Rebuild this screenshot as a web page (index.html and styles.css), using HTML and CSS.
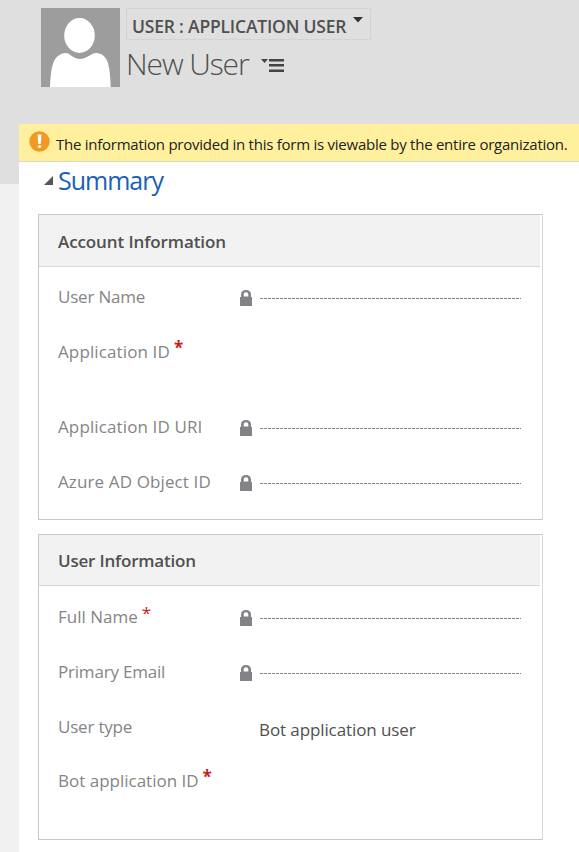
FILE: index.html
```html
<!DOCTYPE html>
<html lang="en">
<head>
<meta charset="utf-8">
<title>New User</title>
<link rel="stylesheet" href="styles.css">
</head>
<body>
<svg class="defs" aria-hidden="true"><symbol id="lock" viewBox="0 0 12 16"><path d="M0 7h1V4.500C1 1.500 3 0 6 0s5 1.500 5 4.500V7h1v9H0zM3.700 6.500h4.600V4.600C8.300 3.100 7.400 2.300 6 2.300S3.700 3.100 3.700 4.600z" fill="#828387" fill-rule="evenodd"/></symbol></svg>
<header class="header">
  <svg class="avatar" viewBox="0 0 79 79"><path fill="#9d9d9d" d="M0 0h79v79H0z"/><ellipse cx="38.500" cy="27.500" rx="15.300" ry="17.500" fill="#fff"/><path d="M9 79C9.500 69 10 62 12 56c2-7 7-11 13-11 4 0 7 6 14 6s11-6 16-6c6 0 10 4 12 10 2 7 2.300 15 2.700 24z" fill="#fff"/></svg>
  <div class="titles">
    <div class="selector"><span class="kind">USER : APPLICATION USER</span><svg class="caret" width="10" height="6" viewBox="0 0 10 6"><path d="M0 0h10L5 5.500z" fill="#333"/></svg></div>
    <div class="name-row"><h1 class="name">New User</h1><svg class="menu" width="24" height="15" viewBox="0 0 24 15"><path d="M0 1h7L3.500 5zM8 1h15v2.500H8zM8 6h15v2.500H8zM8 11.500h15V14H8z" fill="#444"/></svg></div>
  </div>
</header>
<main class="page">
  <div class="notice">
    <svg class="warn" width="21" height="21" viewBox="0 0 21 21"><circle cx="10.500" cy="10.500" r="10.200" fill="#f09a23"/><path d="M8.500 3.500h4L11.700 13H9.300z" fill="#fff"/><circle cx="10.500" cy="15.500" r="1.600" fill="#fff"/></svg>
    <span class="notice-text">The information provided in this form is viewable by the entire organization.</span>
  </div>
  <h2 class="summary"><svg width="9" height="9" viewBox="0 0 9 9"><path d="M9 0v9H0z" fill="#555"/></svg><span class="summary-text">Summary</span></h2>
  <section class="panel">
    <h3 class="panel-head"><span class="h-account">Account Information</span></h3>
    <div class="row"><span class="label snug">User Name</span><svg class="lock"><use href="#lock"/></svg><span class="line"></span></div>
    <div class="row tall"><span class="label wide">Application ID</span><b class="star">*</b></div>
    <div class="row"><span class="label wide">Application ID URI</span><svg class="lock"><use href="#lock"/></svg><span class="line"></span></div>
    <div class="row"><span class="label wide">Azure AD Object ID</span><svg class="lock"><use href="#lock"/></svg><span class="line"></span></div>
  </section>
  <section class="panel second">
    <h3 class="panel-head"><span class="h-user">User Information</span></h3>
    <div class="row"><span class="label">Full Name</span><b class="star thin">*</b><svg class="lock"><use href="#lock"/></svg><span class="line"></span></div>
    <div class="row"><span class="label snug">Primary Email</span><svg class="lock"><use href="#lock"/></svg><span class="line"></span></div>
    <div class="row short"><span class="label snug">User type</span><span class="value">Bot application user</span></div>
    <div class="row"><span class="label">Bot application ID</span><b class="star">*</b></div>
  </section>
</main>
</body>
</html>
```

FILE: styles.css
```css
* { box-sizing: border-box; }
body {
  margin: 0;
  height: 852px;
  overflow: hidden;
  font-family: "Open Sans", "Noto Sans", sans-serif;
  background: linear-gradient(#dfdfdf 184px, #f0f0f0 184px);
}
h1, h2, h3 { margin: 0; font-weight: 400; }
svg { flex: none; display: block; }
.defs { display: none; }
.header { height: 124px; display: flex; padding: 8px 0 0 41px; }
.avatar { width: 79px; height: 79px; }
.titles { margin-left: 6px; }
.selector {
  width: 245px; height: 32px; padding-left: 5px;
  display: flex; align-items: center;
  border: 1px solid #d3d3d3;
  color: #505050;
}
.kind { width: 215px; font-size: 17.5px; font-weight: 600; letter-spacing: -.2px; white-space: nowrap; padding-top: 3px; }
.caret { margin: -8px 0 0 6px; }
.name-row { display: flex; align-items: center; height: 46px; }
.name { width: 135px; font-size: 30px; font-weight: 300; letter-spacing: -1.1px; color: #505050; white-space: nowrap; }
.menu { margin-top: 4px; }
.page { margin-left: 19px; height: 728px; background: #fff; }
.notice { height: 38px; display: flex; padding: 7px 0 0 10px; background: #fff09d; border-bottom: 1px solid #ddd9c4; }
.notice-text { margin-left: 6px; padding-top: 2px; font-size: 15px; line-height: 22px; letter-spacing: -.25px; color: #222; white-space: nowrap; }
.summary { height: 52px; display: flex; padding-left: 25px; color: #1b5fb9; }
.summary svg { margin-top: 14px; }
.summary-text { margin-left: 5px; font-size: 25px; line-height: 36px; letter-spacing: -1px; }
.panel { width: 505px; height: 306px; margin-left: 19px; border: 1px solid #c6c8c8; border-right-color: #d9dada; }
.second { margin-top: 14px; }
.panel-head {
  height: 52px; margin: 0 2px 18px 0; padding: 1px 0 0 19px;
  display: flex; align-items: center;
  background: #f2f2f2; border-bottom: 1px solid #d9d9d9;
  font-size: 17px; font-weight: 600; color: #505050;
}
.h-account { letter-spacing: -.1px; }
.h-user { letter-spacing: -.2px; }
.second .panel-head { height: 51px; padding-top: 0; margin-bottom: 19px; }
.row { height: 55px; padding-left: 19px; display: flex; }
.tall { height: 75px; }
.short { height: 54px; }
.label { font-size: 17px; line-height: 24px; color: #858585; white-space: nowrap; }
.snug { letter-spacing: -.2px; }
.wide { letter-spacing: .12px; }
.star { margin: -4px 0 0 4px; font-size: 17px; line-height: 24px; color: #c71d1d; }
.thin { font-weight: 400; }
.lock { width: 12px; height: 16px; margin: 5px 8px 0 auto; }
.line { width: 261px; height: 1px; margin: 13px 21px 0 0; background: repeating-linear-gradient(90deg, #858585 0 3px, #eee 3px 4px); }
.value { width: 283px; margin-left: auto; padding-top: 3px; font-size: 17px; line-height: 24px; letter-spacing: -.1px; color: #505050; }
```
